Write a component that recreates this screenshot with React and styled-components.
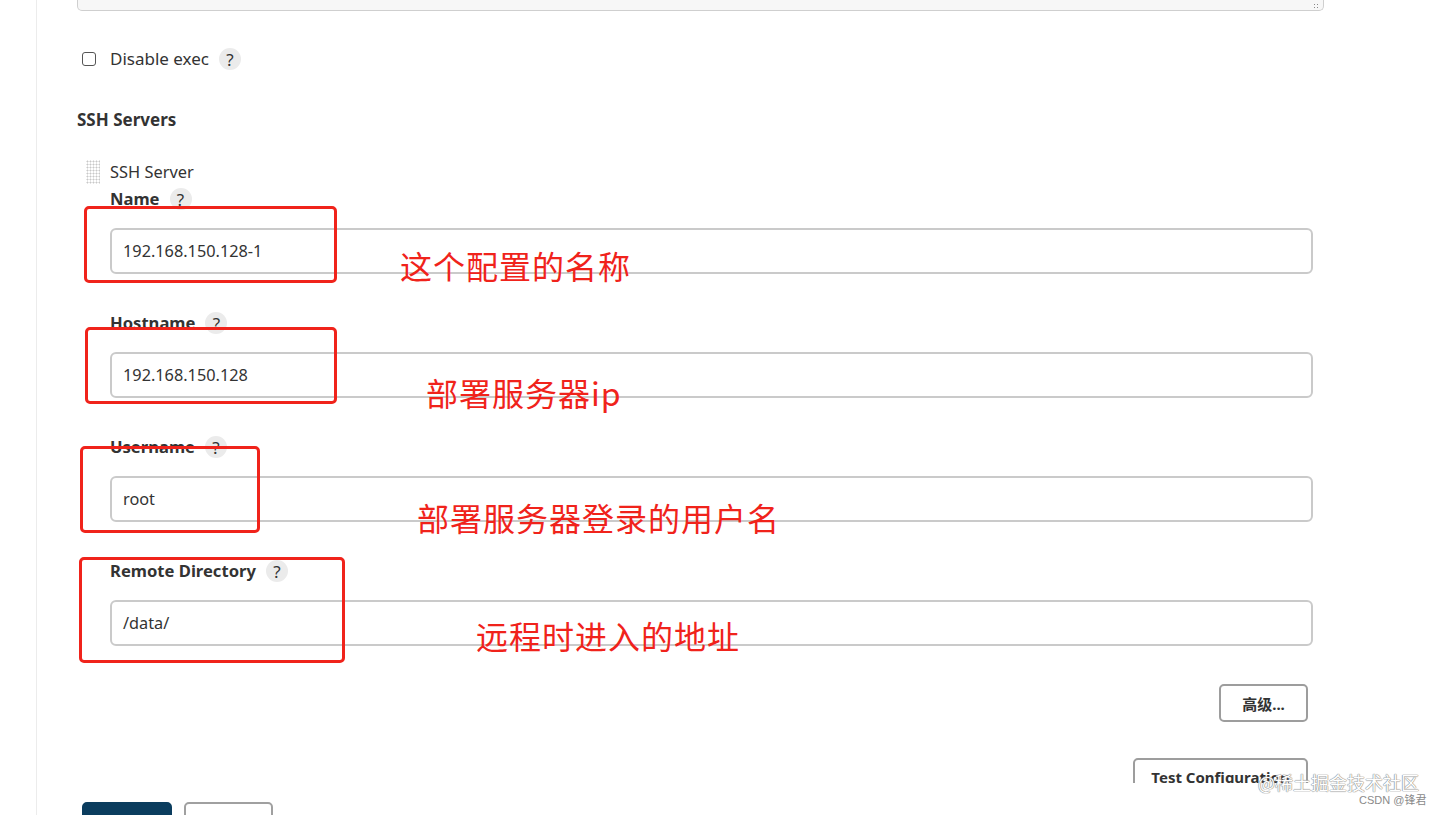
import React from "react";
import styled, { createGlobalStyle } from "styled-components";

const Global = createGlobalStyle`
  html, body { margin: 0; padding: 0; background: #fff; }
  body { font-family: "Noto Sans", "Noto Sans CJK SC", sans-serif; color: #333; overflow: hidden; }
  * { box-sizing: border-box; }
`;

const Page = styled.div`
  position: relative;
  display: flex;
  width: 1442px;
  height: 815px;
  overflow: hidden;
  background: #fff;
`;

const Gutter = styled.div`
  width: 37px;
  flex: none;
  border-right: 1px solid #ececec;
`;

const Main = styled.div`
  flex: 1;
  padding: 0 118px 0 40px;
`;

const TextareaEnd = styled.div`
  position: relative;
  height: 11px;
  background: #f7f7f7;
  border: 1px solid #cfcfcf;
  border-top: none;
  border-radius: 0 0 5px 5px;
`;

const ResizeGrip = styled.span`
  position: absolute;
  right: 4px;
  bottom: 1px;
  width: 6px;
  height: 6px;
  background: radial-gradient(circle, #888 0.8px, transparent 1px) 0 0 / 3px 3px;
`;

const CheckRow = styled.div`
  display: flex;
  align-items: center;
  height: 24px;
  margin-top: 36px;
  padding-left: 5px;
`;

const Check = styled.span`
  width: 14px;
  height: 14px;
  border: 1.5px solid #555;
  border-radius: 3px;
  margin-right: 14px;
`;

const Text = styled.span`
  font-size: ${(p) => p.$size || 16}px;
  line-height: 24px;
  color: #333;
  font-weight: ${(p) => (p.$bold ? 700 : 400)};
`;

const Help = styled.span`
  display: inline-flex;
  align-items: center;
  justify-content: center;
  width: 22px;
  height: 22px;
  border-radius: 50%;
  background: #ebebeb;
  color: #333;
  font-size: 17px;
  line-height: 1;
  margin-left: 10px;
`;

const Heading = styled.div`
  margin-top: 37px;
  font-size: 17px;
  font-weight: 700;
  line-height: 24px;
  color: #333;
`;

const ServerHead = styled.div`
  display: flex;
  align-items: center;
  height: 24px;
  margin-top: 28px;
  padding-left: 9px;
`;

const Handle = styled.span`
  width: 14px;
  height: 24px;
  margin-right: 10px;
  background: radial-gradient(circle, #c8c8c8 0.9px, transparent 1.1px) 0 0 / 3px 3px;
`;

const Fields = styled.div`
  padding-left: 33px;
  padding-right: 11px;
`;

const Field = styled.div`
  margin-top: ${(p) => (p.$first ? "3px" : "37px")};
`;

const LabelRow = styled.div`
  display: flex;
  align-items: center;
  height: 24px;
`;

const Input = styled.div`
  margin-top: 17px;
  height: 46px;
  border: 2px solid #cacaca;
  border-radius: 6px;
  display: flex;
  align-items: center;
  padding-left: 11px;
  font-size: 16.3px;
  color: #333;
`;

const ButtonRow = styled.div`
  display: flex;
  justify-content: flex-end;
  padding-right: 5px;
  margin-top: ${(p) => p.$mt}px;
`;

const Button = styled.div`
  height: 38px;
  width: ${(p) => p.$w}px;
  border: 2px solid #9d9d9d;
  border-radius: 5px;
  display: flex;
  align-items: center;
  justify-content: center;
  font-size: 15px;
  font-weight: 700;
  color: #333;
  background: #fff;
`;

const BottomBar = styled.div`
  position: absolute;
  left: 37px;
  right: 0;
  bottom: 0;
  height: 32px;
  background: #fff;
  display: flex;
  gap: 12px;
  padding: 19px 0 0 45px;
`;

const BarButton = styled.div`
  width: ${(p) => p.$w}px;
  height: 38px;
  border-radius: 5px;
  background: ${(p) => (p.$primary ? "#0b3d5e" : "#fff")};
  border: 2px solid ${(p) => (p.$primary ? "#0b3d5e" : "#a0a0a0")};
`;

const RedBox = styled.div`
  position: absolute;
  border: 3px solid #f0231b;
  border-radius: 5px;
`;

const Note = styled.div`
  position: absolute;
  font-family: "Noto Sans CJK SC", sans-serif;
  font-size: 32px;
  line-height: 40px;
  color: #f0231b;
  white-space: nowrap;
  letter-spacing: 1px;
`;

const Watermark = styled.div`
  position: absolute;
  left: 1258px;
  top: 768px;
  font-family: "Noto Sans CJK SC", sans-serif;
  font-size: 18px;
  line-height: 28px;
  color: #fff;
  text-shadow: 0 0 1px #8a8a8a, 0 0 1px #8a8a8a, 0 0 1px #8a8a8a;
`;

const Credit = styled.div`
  position: absolute;
  left: 1359px;
  top: 792px;
  font-family: "Liberation Sans", "Noto Sans CJK SC", sans-serif;
  font-size: 11px;
  line-height: 16px;
  color: #8a8a8a;
`;

const fields = [
  { label: "Name", value: "192.168.150.128-1" },
  { label: "Hostname", value: "192.168.150.128" },
  { label: "Username", value: "root" },
  { label: "Remote Directory", value: "/data/" },
];

const boxes = [
  { l: 84, t: 206, w: 253, h: 77 },
  { l: 85, t: 327, w: 252, h: 77 },
  { l: 80, t: 446, w: 180, h: 87 },
  { l: 79, t: 557, w: 266, h: 106 },
];

const notes = [
  { l: 400, t: 245, text: "这个配置的名称" },
  { l: 426, t: 372, text: "部署服务器ip" },
  { l: 417, t: 497, text: "部署服务器登录的用户名" },
  { l: 476, t: 615, text: "远程时进入的地址" },
];

export default function App() {
  return (
    <Page>
      <Global />
      <Gutter />
      <Main>
        <TextareaEnd>
          <ResizeGrip />
        </TextareaEnd>
        <CheckRow>
          <Check />
          <Text $size={17}>Disable exec</Text>
          <Help>?</Help>
        </CheckRow>
        <Heading>SSH Servers</Heading>
        <ServerHead>
          <Handle />
          <Text $size={16.4}>SSH Server</Text>
        </ServerHead>
        <Fields>
          {fields.map((f, i) => (
            <Field key={f.label} $first={i === 0}>
              <LabelRow>
                <Text $bold $size={16.6}>{f.label}</Text>
                <Help>?</Help>
              </LabelRow>
              <Input>{f.value}</Input>
            </Field>
          ))}
          <ButtonRow $mt={38}>
            <Button $w={89}>高级...</Button>
          </ButtonRow>
          <ButtonRow $mt={36}>
            <Button $w={175}>Test Configuration</Button>
          </ButtonRow>
        </Fields>
      </Main>
      <BottomBar>
        <BarButton $primary $w={90} />
        <BarButton $w={89} />
      </BottomBar>
      {boxes.map((b, i) => (
        <RedBox key={i} style={{ left: b.l, top: b.t, width: b.w, height: b.h }} />
      ))}
      {notes.map((n, i) => (
        <Note key={i} style={{ left: n.l, top: n.t }}>
          {n.text}
        </Note>
      ))}
      <Watermark>@稀土掘金技术社区</Watermark>
      <Credit>CSDN @锋君</Credit>
    </Page>
  );
}
